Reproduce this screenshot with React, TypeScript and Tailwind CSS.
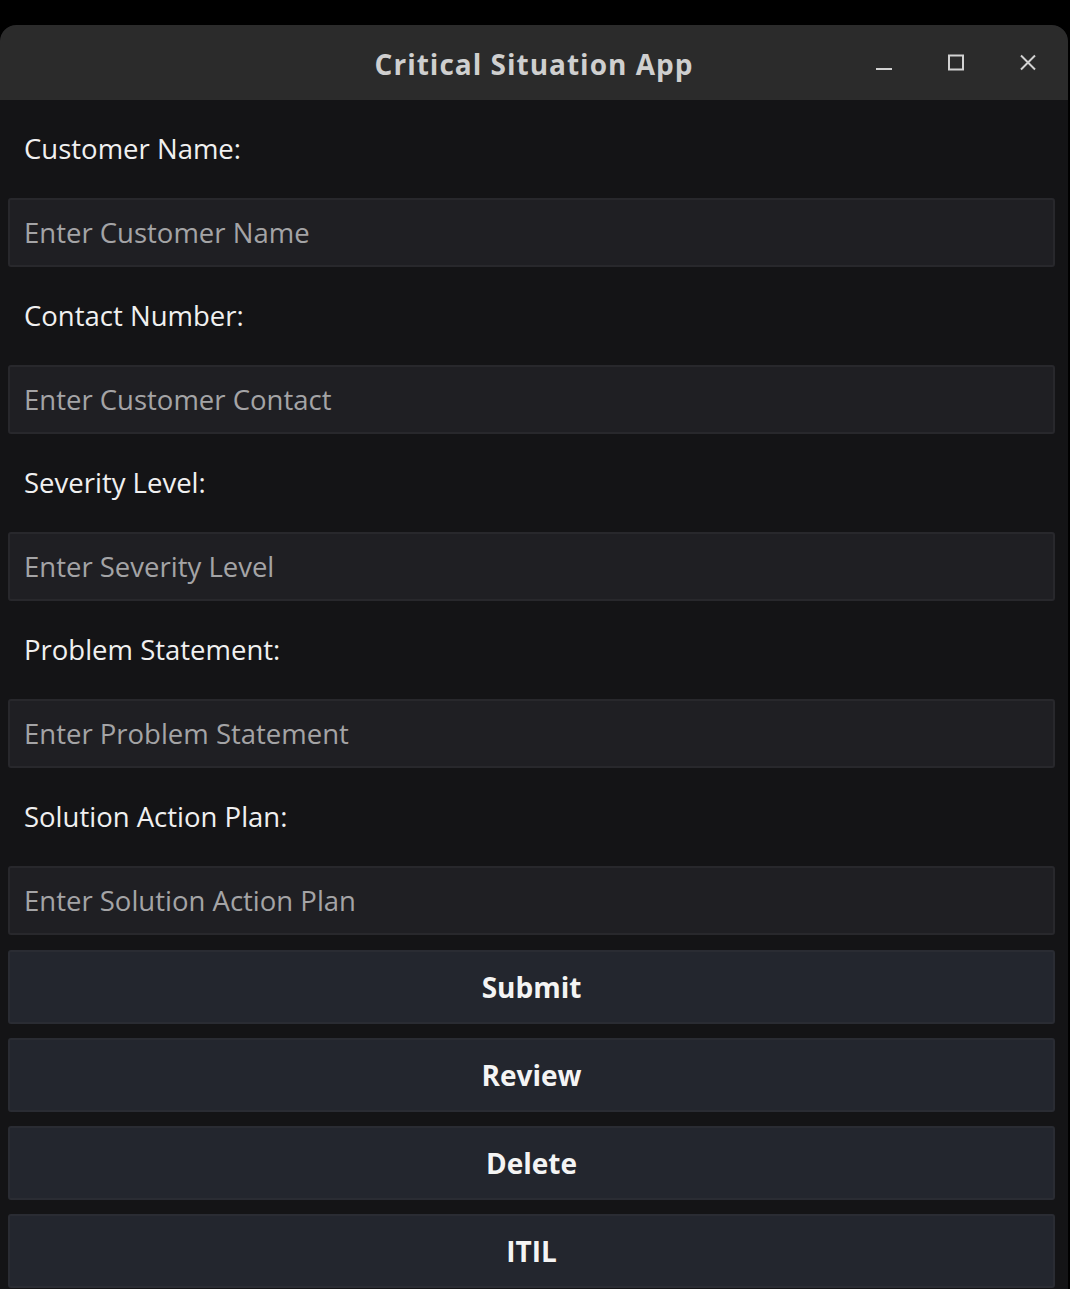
import React from "react";

/* --------------------------------------------------------------------------
   Form fields
   -------------------------------------------------------------------------- */
const FIELDS = [
  { label: "Customer Name:", placeholder: "Enter Customer Name" },
  { label: "Contact Number:", placeholder: "Enter Customer Contact" },
  { label: "Severity Level:", placeholder: "Enter Severity Level" },
  { label: "Problem Statement:", placeholder: "Enter Problem Statement" },
  { label: "Solution Action Plan:", placeholder: "Enter Solution Action Plan" },
];

const ACTIONS = ["Submit", "Review", "Delete", "ITIL"];

/* --------------------------------------------------------------------------
   Title bar with window controls
   -------------------------------------------------------------------------- */
function TitleBar() {
  return (
    <div className="relative flex h-[75px] items-center justify-center rounded-t-[16px] bg-[#2b2b2b] pt-[3px]">
      <span className="text-[28px] font-bold tracking-[1px] text-[#cfcfcf]">
        Critical Situation App
      </span>
      <div className="absolute right-[30px] top-0 flex h-full items-center gap-[52px] text-[#d2d2d2]">
        <svg width="20" height="20" viewBox="0 0 20 20" className="mt-[8px]">
          <line x1="2" y1="12" x2="18" y2="12" stroke="currentColor" strokeWidth="2" />
        </svg>
        <svg width="20" height="20" viewBox="0 0 20 20">
          <rect x="3" y="2.5" width="14" height="14" fill="none" stroke="currentColor" strokeWidth="2" />
        </svg>
        <svg width="20" height="20" viewBox="0 0 20 20">
          <path d="M3 2.5 L17 16.5 M17 2.5 L3 16.5" stroke="currentColor" strokeWidth="2" />
        </svg>
      </div>
    </div>
  );
}

export default function App() {
  return (
    <div
      className="h-[1289px] overflow-hidden bg-black pt-[25px] pr-[2px]"
      style={{ fontFamily: '"Open Sans", "Noto Sans", sans-serif' }}
    >
      <div className="h-full overflow-hidden rounded-t-[16px] bg-[#141416]">
        <TitleBar />

        <div className="flex flex-col pl-[8px] pr-[13px]">
          {FIELDS.map((field) => (
            <div key={field.label} className="flex flex-col">
              <div className="flex h-[98px] items-center pl-[16px] text-[27.5px] text-[#f0f0f0]">
                {field.label}
              </div>
              <input
                type="text"
                placeholder={field.placeholder}
                className="h-[69px] w-full rounded-[3px] border-2 border-[#28282c] bg-[#1f1f23] px-[14px] text-[27.5px] text-[#e0e0e0] outline-none placeholder:text-[#a4a4a6]"
              />
            </div>
          ))}

          {/* ---- Action buttons ---- */}
          <div className="mt-[15px] flex flex-col gap-[14px]">
            {ACTIONS.map((action) => (
              <button
                key={action}
                type="button"
                className="h-[74px] w-full rounded-[3px] border-2 border-[#2a2c33] bg-[#23262e] text-[28px] font-bold text-[#f4f4f4]"
              >
                {action}
              </button>
            ))}
          </div>
        </div>
      </div>
    </div>
  );
}
